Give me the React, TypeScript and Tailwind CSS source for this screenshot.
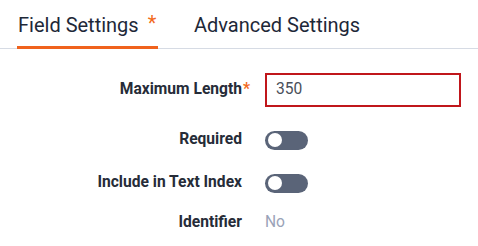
import React from "react";

function Toggle() {
  return (
    <div className="w-[43px] h-[19px] rounded-full bg-[#5a6478] flex items-center px-[3px]">
      <div className="w-[14px] h-[14px] rounded-full bg-white" />
    </div>
  );
}

function Row({ label, req, children, h }: { label: string; req?: boolean; children: React.ReactNode; h: string }) {
  return (
    <div className={`flex items-center ${h}`}>
      <div className="w-[251px] flex justify-end items-center text-[15.6px] font-bold text-[#262c38]">
        <span>{label}</span>
        <span className="w-[9px] text-[#f26a1b] pl-[1px] leading-none">{req ? "*" : ""}</span>
      </div>
      <div className="pl-[14px] flex items-center">{children}</div>
    </div>
  );
}

export default function App() {
  return (
    <div className="w-[478px] h-[246px] bg-white overflow-hidden" style={{ fontFamily: "Roboto, 'Liberation Sans', sans-serif" }}>
      <div className="flex border-b-[1.5px] border-[#d6dbe4] h-[49px] pl-[17px]">
        <div className="relative flex items-center pt-[1px] text-[20px] text-[#1e2838] w-[141px] pl-[1px]">
          <span>Field Settings</span>
          <span className="text-[#f26a1b] ml-[9px] -translate-y-[2px]">*</span>
          <div className="absolute left-0 right-0 bottom-[-1px] h-[3px] bg-[#f0621c]" />
        </div>
        <div className="flex items-center pt-[1px] text-[20px] text-[#1e2838] ml-[36px]">Advanced Settings</div>
      </div>
      <div className="pt-[24px]">
        <Row label="Maximum Length" req h="h-[34px]">
          <div className="w-[196px] h-[34px] border-2 border-[#c0161b] flex items-center pl-[9px] text-[15.6px] text-[#4a4f5a]">
            350
          </div>
        </Row>
        <div className="h-[21px]" />
        <Row label="Required" h="h-[24px]">
          <Toggle />
        </Row>
        <div className="h-[19px]" />
        <Row label="Include in Text Index" h="h-[24px]">
          <Toggle />
        </Row>
        <div className="h-[16px]" />
        <Row label="Identifier" h="h-[24px]">
          <span className="text-[15.6px] text-[#9aa3b8]">No</span>
        </Row>
      </div>
    </div>
  );
}
